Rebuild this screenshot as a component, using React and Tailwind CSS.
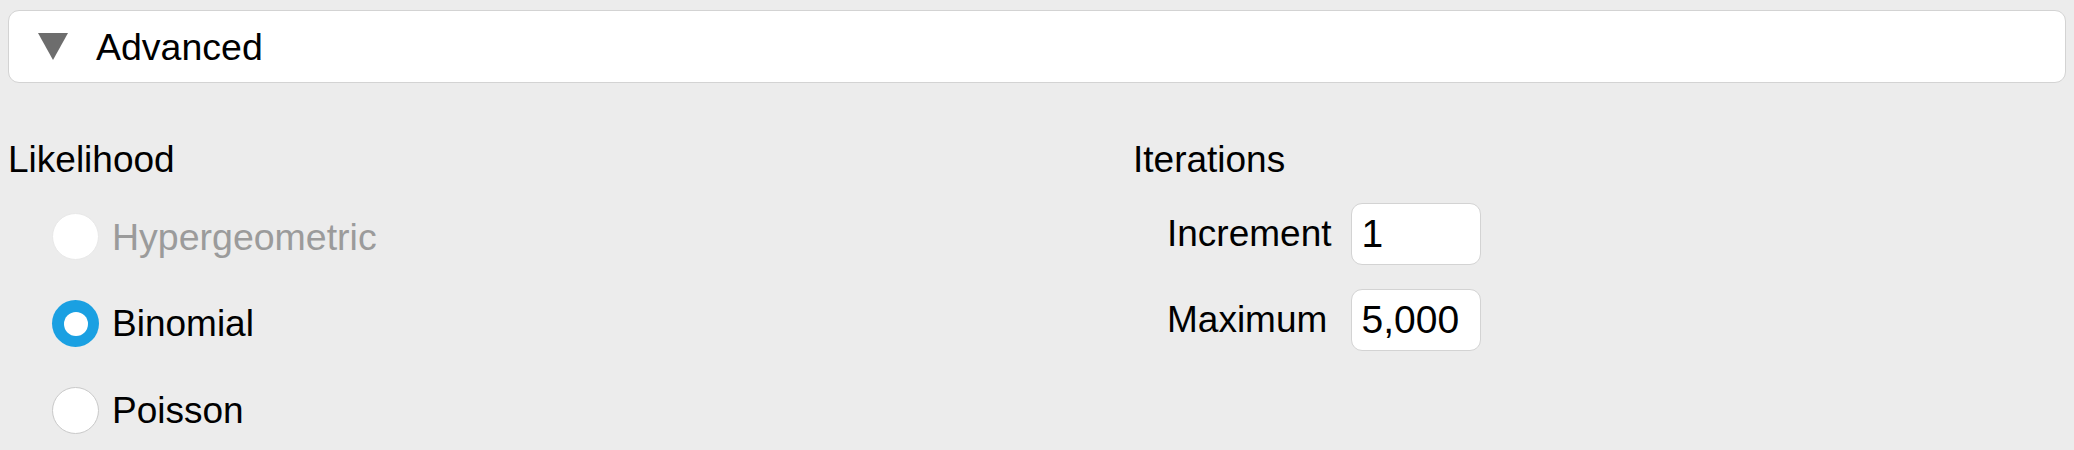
export default function App() {
  const font = { fontFamily: '"Liberation Sans", Arial, sans-serif' };
  return (
    <div className="w-[2074px] h-[450px] bg-[#ececec] text-black overflow-hidden" style={font}>
      <div className="pt-[10px] px-[8px]">
        <div className="h-[73px] w-[2058px] bg-white border border-[#d3d3d3] rounded-[11px] flex items-center pl-[29px]">
          <svg width="30" height="27" viewBox="0 0 30 27" className="shrink-0">
            <polygon points="0,0 30,0 15,27" fill="#6d6d6d" />
          </svg>
          <span className="ml-[28px] text-[37.5px] leading-[44px]">Advanced</span>
        </div>
      </div>
      <div className="flex pl-[8px] pt-[55px]">
        <div className="w-[1125px] flex flex-col">
          <div className="text-[37px] leading-[44px]">Likelihood</div>
          <div className="flex flex-col gap-[40px] pl-[44px] pt-[31px]">
            <div className="flex items-center h-[47px]">
              <div className="w-[47px] h-[47px] rounded-full bg-white border border-[#e8e8e8]" />
              <span className="ml-[13px] text-[37.5px] leading-[44px] text-[#9b9b9b]">Hypergeometric</span>
            </div>
            <div className="flex items-center h-[47px]">
              <div className="w-[47px] h-[47px] rounded-full bg-[#1aa0e2] flex items-center justify-center">
                <div className="w-[24px] h-[24px] rounded-full bg-white" />
              </div>
              <span className="ml-[13px] text-[37px] leading-[44px]">Binomial</span>
            </div>
            <div className="flex items-center h-[47px]">
              <div className="w-[47px] h-[47px] rounded-full bg-white border border-[#c9c9c9]" />
              <span className="ml-[13px] text-[37px] leading-[44px]">Poisson</span>
            </div>
          </div>
        </div>
        <div className="flex flex-col">
          <div className="text-[37px] leading-[44px]">Iterations</div>
          <div className="grid grid-cols-[auto_130px] gap-x-[19px] gap-y-[24px] items-center pl-[34px] pt-[21px]">
            <span className="text-[37px] leading-[44px]">Increment</span>
            <div className="h-[62px] bg-white border border-[#d3d3d3] rounded-[11px] flex items-center pl-[10px] text-[39px] leading-[44px]">1</div>
            <span className="text-[37px] leading-[44px]">Maximum</span>
            <div className="h-[62px] bg-white border border-[#d3d3d3] rounded-[11px] flex items-center pl-[10px] text-[39px] leading-[44px]">5,000</div>
          </div>
        </div>
      </div>
    </div>
  );
}
